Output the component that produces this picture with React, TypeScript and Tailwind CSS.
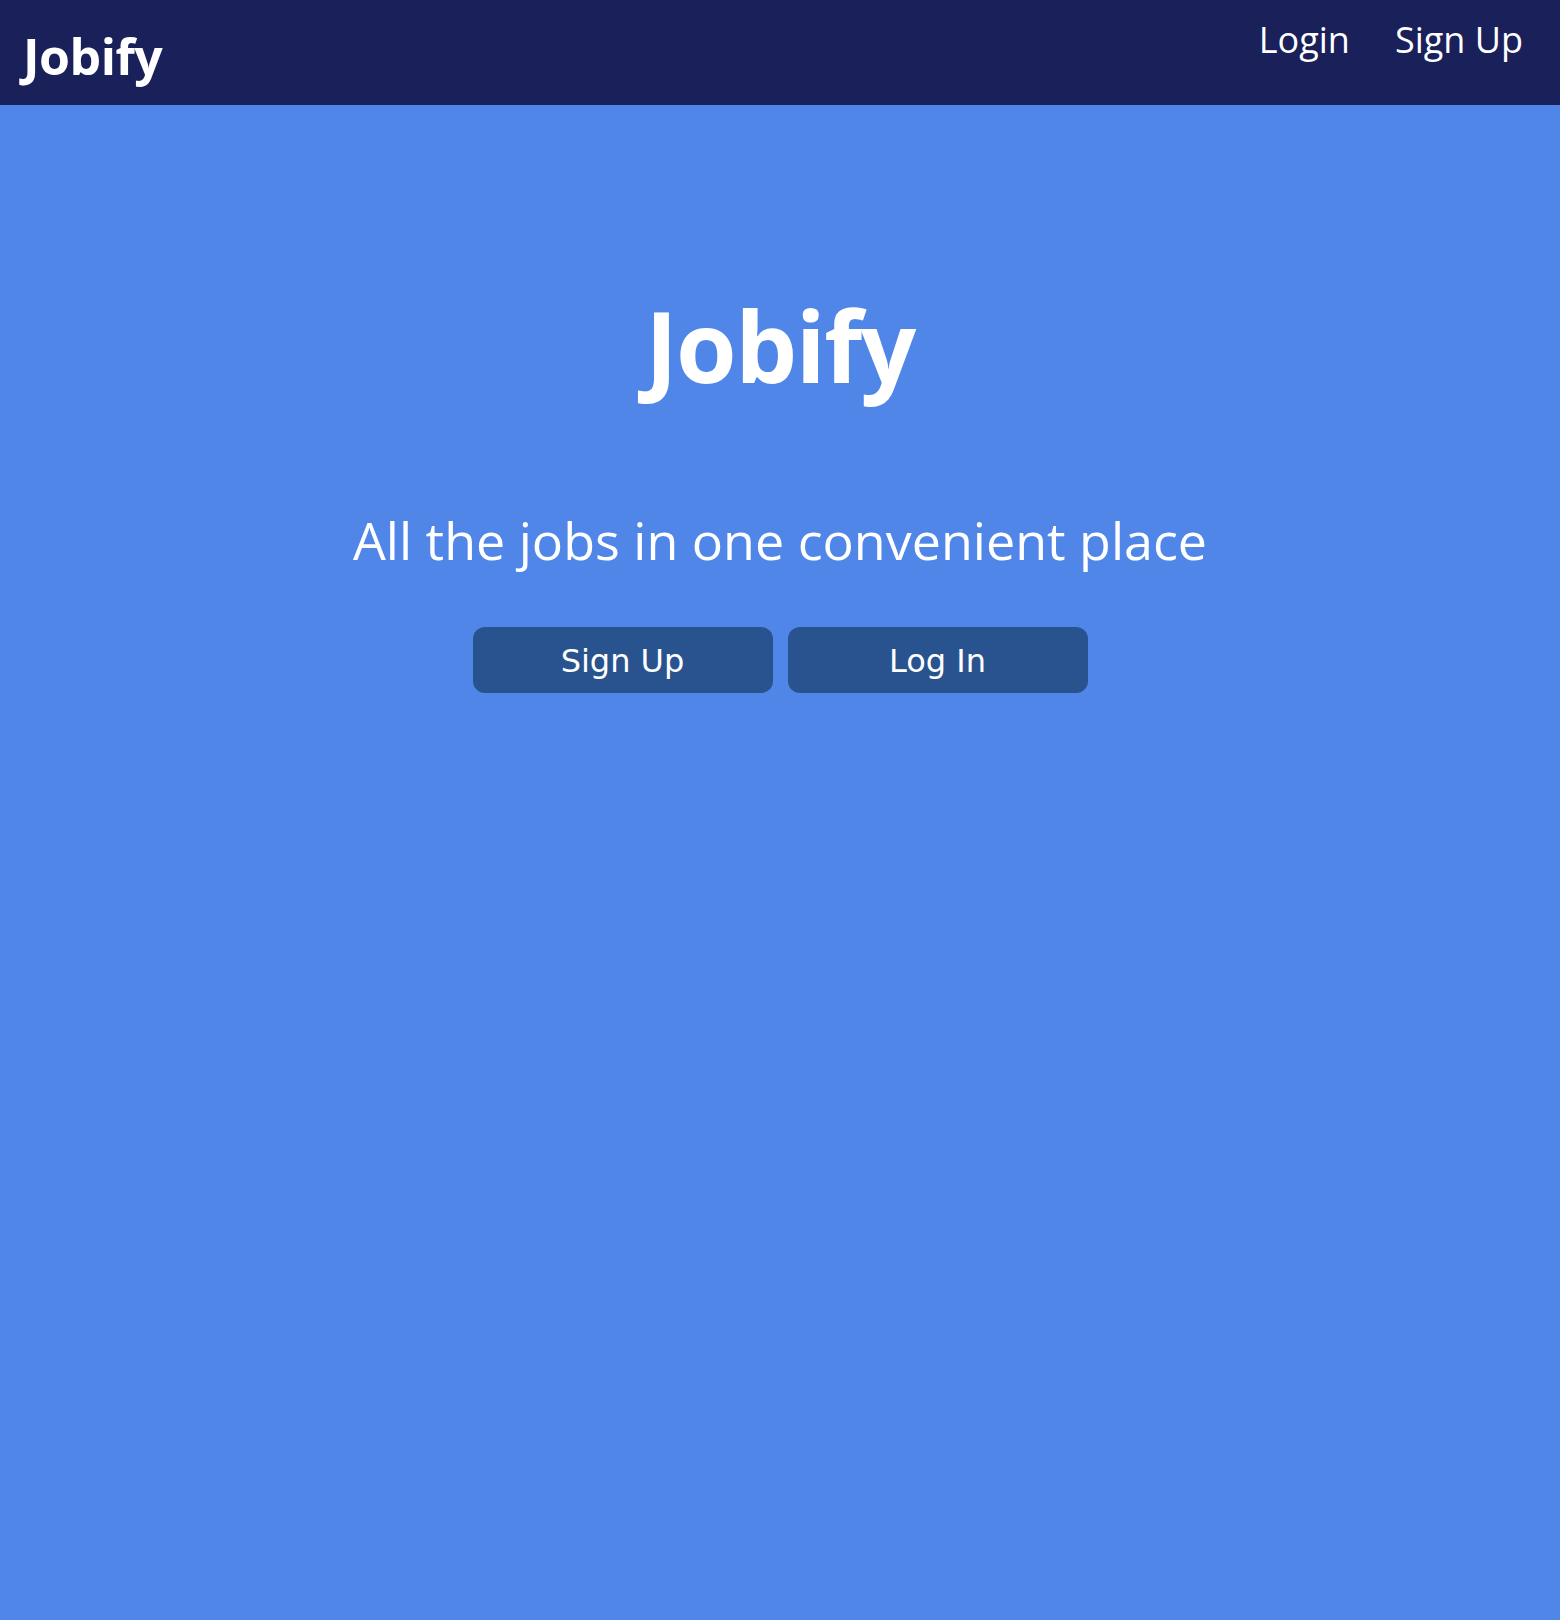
export default function App() {
  return (
    <div className="min-h-screen bg-[#4f86e8] font-['Open_Sans','Noto_Sans',sans-serif] text-white">
      {/* Navbar */}
      <nav className="flex h-[105px] items-start justify-between bg-[#1a205a] px-[23px]">
        <a href="#" className="mt-[25px] text-[50px] leading-[62px] font-bold tracking-[-0.5px]">
          Jobify
        </a>
        <div className="mt-[15px] mr-[14px] flex gap-[45px] text-[36px] leading-[50px]">
          <a href="#">Login</a>
          <a href="#">Sign Up</a>
        </div>
      </nav>

      {/* Hero */}
      <main className="flex flex-col items-center pt-[180px]">
        <h1 className="text-[98px] leading-[120px] font-bold tracking-[-1.5px]">Jobify</h1>
        <p className="mt-[103px] text-[52px] leading-[64px] font-normal">
          All the jobs in one convenient place
        </p>
        <div className="mt-[55px] flex gap-[15px]">
          <button className="h-[66px] w-[300px] rounded-[12px] bg-[#29538f] pt-[2px] font-['DejaVu_Sans',sans-serif] text-[32px] text-white">
            Sign Up
          </button>
          <button className="h-[66px] w-[300px] rounded-[12px] bg-[#29538f] pt-[2px] font-['DejaVu_Sans',sans-serif] text-[32px] text-white">
            Log In
          </button>
        </div>
      </main>
    </div>
  );
}
